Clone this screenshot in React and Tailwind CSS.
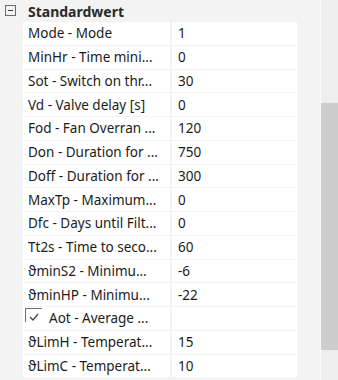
import React from 'react';

const rows = [
  { name: 'Mode - Mode', value: '1' },
  { name: 'MinHr - Time mini...', value: '0' },
  { name: 'Sot - Switch on thr...', value: '30' },
  { name: 'Vd - Valve delay [s]', value: '0' },
  { name: 'Fod - Fan Overran ...', value: '120' },
  { name: 'Don - Duration for ...', value: '750' },
  { name: 'Doff - Duration for ...', value: '300' },
  { name: 'MaxTp - Maximum...', value: '0' },
  { name: 'Dfc - Days until Filt...', value: '0' },
  { name: 'Tt2s - Time to seco...', value: '60' },
  { name: 'ϑminS2 - Minimu...', value: '-6' },
  { name: 'ϑminHP - Minimu...', value: '-22' },
  { name: 'Aot - Average ...', value: '', check: true },
  { name: 'ϑLimH - Temperat...', value: '15' },
  { name: 'ϑLimC - Temperat...', value: '10' },
];

const PropertyGrid = () => {
  return (
    <div className="w-[338px] h-[380px] bg-[#f3f3f3] flex overflow-hidden text-[13.5px] text-[#1b1b1b] font-['Noto_Sans',sans-serif]">
      {/* Grid area */}
      <div className="w-[320px] flex flex-col">
        {/* Category header */}
        <div className="h-[22px] flex items-center">
          <div className="ml-[5px] -mt-[2px] w-[11px] h-[11px] border border-[#6a6a6a] flex items-center justify-center">
            <div className="w-[5px] h-px bg-[#3a3a3a]" />
          </div>
          <span className="ml-[12px] font-bold text-[14px] text-[#2a2a2a]">Standardwert</span>
        </div>

        {/* Properties */}
        <div className="ml-[23px] w-[274px] grid auto-rows-[22.76px] gap-y-px">
          {rows.map((row) => (
            <div key={row.name} className="flex gap-[2px]">
              <div className="w-[147px] bg-white flex items-center whitespace-nowrap overflow-hidden">
                {row.check ? (
                  <>
                    <div className="ml-[2px] self-start mt-px w-[17px] h-[14px] border-t border-l border-[#707070] flex items-end justify-center">
                      <svg width="10" height="8" viewBox="0 0 10 8" className="mb-[1px]">
                        <path d="M1 4 L4 7 L9 1" fill="none" stroke="#404040" strokeWidth="1.2" />
                      </svg>
                    </div>
                    <span className="ml-[7px]">{row.name}</span>
                  </>
                ) : (
                  <span className="pl-[5px]">{row.name}</span>
                )}
              </div>
              <div className="flex-1 bg-white flex items-center pl-[6px]">{row.value}</div>
            </div>
          ))}
        </div>
      </div>

      {/* Scrollbar */}
      <div className="flex-1 border-l border-[#fafafa] bg-[#eeeeee] flex flex-col">
        <div className="h-[103px]" />
        <div className="h-[247px] bg-[#cdcdcd]" />
      </div>
    </div>
  );
};

export default PropertyGrid;
